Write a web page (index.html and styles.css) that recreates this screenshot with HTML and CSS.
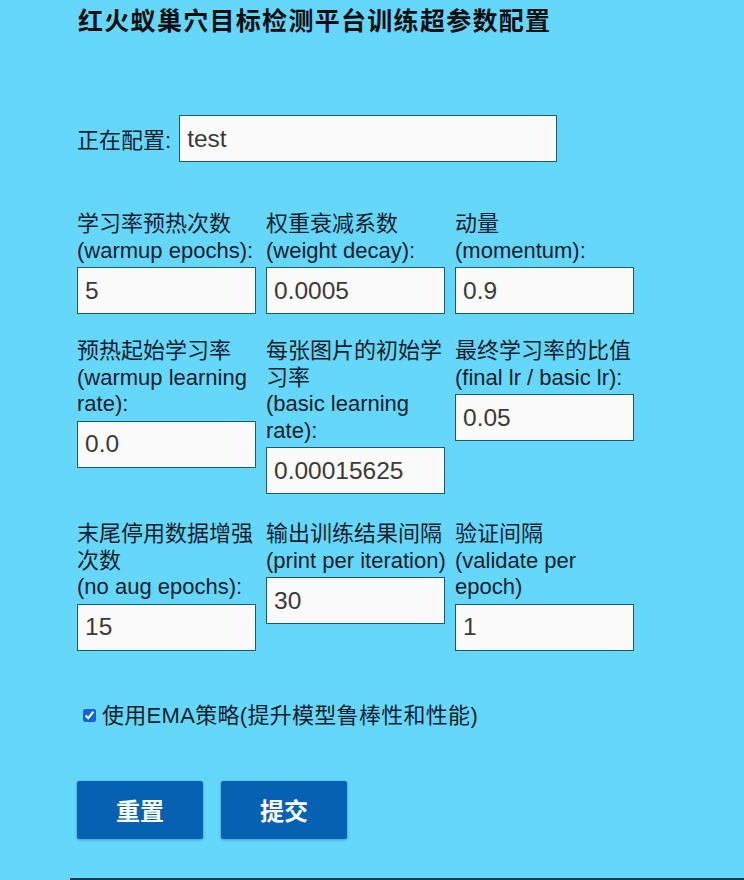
FILE: index.html
```html
<!DOCTYPE html>
<html lang="zh-CN">
<head>
<meta charset="utf-8">
<title>红火蚁巢穴目标检测平台训练超参数配置</title>
<link rel="stylesheet" href="styles.css">
</head>
<body>
<div class="page">
  <h1 class="title">红火蚁巢穴目标检测平台训练超参数配置</h1>

  <div class="config-row">
    <label class="config-label" for="cfg">正在配置:</label>
    <input class="config-input" id="cfg" type="text" value="test">
  </div>

  <div class="grid">
    <div class="field">
      <label class="field-label">学习率预热次数<br>(warmup epochs):</label>
      <input class="field-input" type="text" value="5">
    </div>
    <div class="field">
      <label class="field-label">权重衰减系数<br>(weight decay):</label>
      <input class="field-input" type="text" value="0.0005">
    </div>
    <div class="field">
      <label class="field-label">动量<br>(momentum):</label>
      <input class="field-input" type="text" value="0.9">
    </div>

    <div class="field">
      <label class="field-label">预热起始学习率<br>(warmup learning rate):</label>
      <input class="field-input" type="text" value="0.0">
    </div>
    <div class="field">
      <label class="field-label">每张图片的初始学习率<br>(basic learning rate):</label>
      <input class="field-input" type="text" value="0.00015625">
    </div>
    <div class="field">
      <label class="field-label">最终学习率的比值<br>(final lr / basic lr):</label>
      <input class="field-input" type="text" value="0.05">
    </div>

    <div class="field field-low">
      <label class="field-label">末尾停用数据增强次数<br>(no aug epochs):</label>
      <input class="field-input" type="text" value="15">
    </div>
    <div class="field field-low">
      <label class="field-label">输出训练结果间隔<br>(print per iteration)</label>
      <input class="field-input" type="text" value="30">
    </div>
    <div class="field field-low">
      <label class="field-label">验证间隔<br>(validate per epoch)</label>
      <input class="field-input" type="text" value="1">
    </div>
  </div>

  <label class="check-row">
    <input class="check" type="checkbox" checked>
    <span class="check-text">使用EMA策略(提升模型鲁棒性和性能)</span>
  </label>

  <div class="buttons">
    <button class="btn" type="button">重置</button>
    <button class="btn" type="button">提交</button>
  </div>

  <div class="bottom-line"></div>
</div>
</body>
</html>
```

FILE: styles.css
```css
html, body {
  margin: 0;
  padding: 0;
  background: #64d7fb;
}

body {
  font-family: "Liberation Sans", Arial, "Noto Sans CJK SC", sans-serif;
  color: #14202b;
  height: 880px;
  overflow: hidden;
}

.page {
  padding-left: 77px;
}

.title {
  margin: 0;
  padding-top: 4px;
  padding-left: 1px;
  font-family: "Noto Sans CJK SC", sans-serif;
  font-size: 25px;
  line-height: 30px;
  font-weight: 700;
  color: #0e0e0e;
  letter-spacing: 1.3px;
}

.config-row {
  display: flex;
  align-items: center;
  margin-top: 81px;
}

.config-label {
  font-size: 22px;
  line-height: 26px;
  margin-right: 8px;
  padding-top: 4px;
}

.config-input,
.field-input {
  box-sizing: border-box;
  height: 47px;
  border: 1px solid #1d5877;
  border-radius: 0;
  background: #fbfbfb;
  font-family: "Liberation Sans", Arial, sans-serif;
  font-size: 24.5px;
  color: #3a3a3a;
  padding: 0 7px;
  outline: none;
}

.config-input {
  width: 378px;
}

.grid {
  display: grid;
  grid-template-columns: repeat(3, 180px);
  column-gap: 9px;
  row-gap: 24px;
  align-items: start;
  margin-top: 49px;
}

.field {
  display: flex;
  flex-direction: column;
}

.field-low {
  margin-top: 3px;
}

.field-label {
  font-size: 22px;
  line-height: 26.5px;
  margin-bottom: 3px;
}

.field-input {
  width: 179px;
}

.check-row {
  display: flex;
  align-items: center;
  margin-top: 52px;
  font-size: 22px;
  line-height: 26px;
  color: #14202b;
}

.check {
  width: 13px;
  height: 13px;
  margin: 0 6px 0 6px;
  accent-color: #1565d8;
}

.check-text {
  font-family: "Liberation Sans", Arial, "Noto Sans CJK SC", sans-serif;
  letter-spacing: 0.3px;
}

.buttons {
  display: flex;
  gap: 18px;
  margin-top: 52px;
}

.btn {
  width: 126px;
  height: 58px;
  border: none;
  border-radius: 2px;
  background: #0661b3;
  color: #ffffff;
  font-family: "Noto Sans CJK SC", sans-serif;
  font-size: 24px;
  font-weight: 700;
  box-shadow: 0 1px 3px rgba(0, 40, 90, 0.35);
  cursor: pointer;
}

.bottom-line {
  margin-top: 39px;
  margin-left: -7px;
  height: 2px;
  background: #123a55;
}
```
